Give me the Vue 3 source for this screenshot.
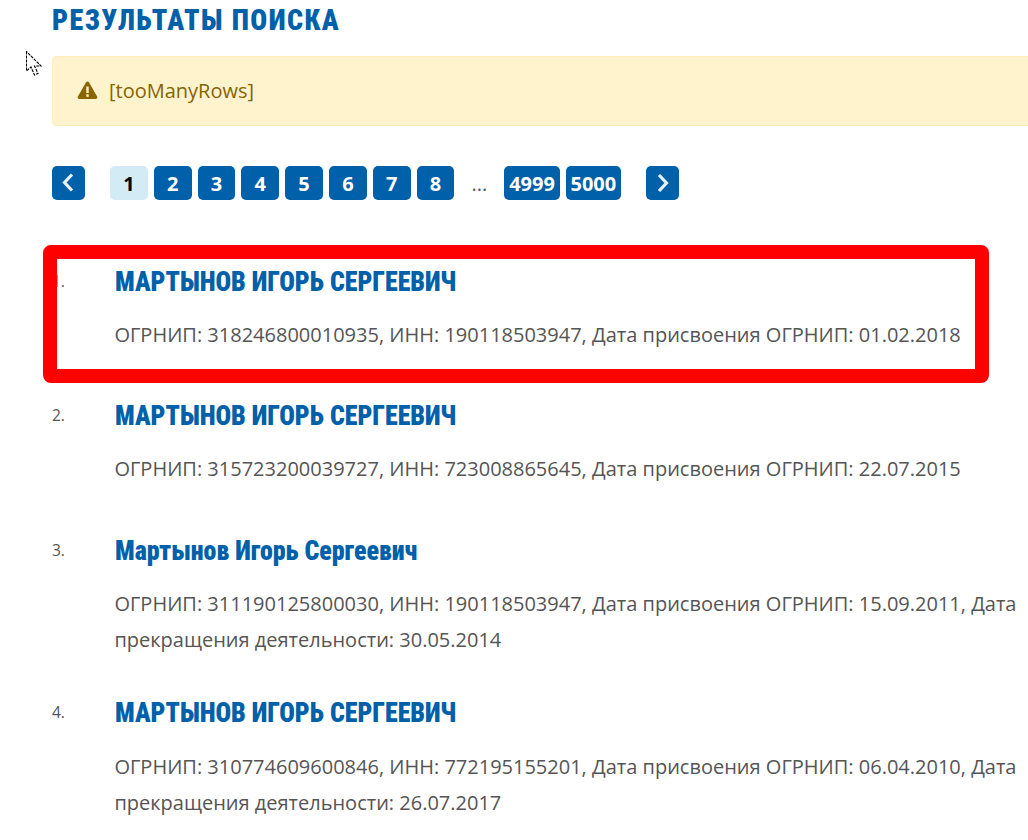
<script setup>
const pages = ['2', '3', '4', '5', '6', '7', '8']
const items = [
  { n: '1.', name: 'МАРТЫНОВ ИГОРЬ СЕРГЕЕВИЧ', lines: 'ОГРНИП: 318246800010935, ИНН: 190118503947, Дата присвоения ОГРНИП: 01.02.2018' },
  { n: '2.', name: 'МАРТЫНОВ ИГОРЬ СЕРГЕЕВИЧ', lines: 'ОГРНИП: 315723200039727, ИНН: 723008865645, Дата присвоения ОГРНИП: 22.07.2015' },
  { n: '3.', name: 'Мартынов Игорь Сергеевич', lines: 'ОГРНИП: 311190125800030, ИНН: 190118503947, Дата присвоения ОГРНИП: 15.09.2011, Дата прекращения деятельности: 30.05.2014' },
  { n: '4.', name: 'МАРТЫНОВ ИГОРЬ СЕРГЕЕВИЧ', lines: 'ОГРНИП: 310774609600846, ИНН: 772195155201, Дата присвоения ОГРНИП: 06.04.2010, Дата прекращения деятельности: 26.07.2017' }
]
</script>

<template>
  <div class="page">
    <h1 class="title">РЕЗУЛЬТАТЫ ПОИСКА</h1>
    <div class="alert">
      <svg class="warn" viewBox="0 0 20 18" width="21" height="18">
        <path d="M10 0.5c.7 0 1.2.3 1.6 1l8 14c.7 1.2-.1 2.5-1.5 2.5H1.9C.5 18-.3 16.700.4 15.500l8-14c.4-.7.9-1 1.600-1z" fill="#8a6500" />
        <rect x="8.800" y="5.500" width="2.400" height="6.500" fill="#fff3cd" />
        <rect x="8.800" y="13.300" width="2.400" height="2.500" fill="#fff3cd" />
      </svg>
      <span>[tooManyRows]</span>
    </div>
    <nav class="pager">
      <a class="btn arrow">
        <svg viewBox="0 0 33 34" width="33" height="34"><path d="M20 8.500l-7.500 8 7.500 8" fill="none" stroke="#e8f1f8" stroke-width="3.200" /></svg>
      </a>
      <div class="nums">
        <a class="btn num current">1</a>
        <a v-for="p in pages" :key="p" class="btn num">{{ p }}</a>
      </div>
      <span class="dots">...</span>
      <div class="nums">
        <a class="btn num">4999</a>
        <a class="btn num">5000</a>
      </div>
      <a class="btn arrow next">
        <svg viewBox="0 0 33 34" width="33" height="34"><path d="M13 9l7.500 8-7.500 8" fill="none" stroke="#e8f1f8" stroke-width="3.200" /></svg>
      </a>
    </nav>
    <ol class="results">
      <li v-for="item in items" :key="item.n" class="row">
        <span class="idx">{{ item.n }}</span>
        <div class="body">
          <h2 class="name">{{ item.name }}</h2>
          <p class="meta">{{ item.lines }}</p>
        </div>
      </li>
    </ol>
    <div class="mark"></div>
    <svg class="cursor" viewBox="0 0 16 25" width="16" height="25">
      <path d="M0.500 0.500v19.500l4.500-4 3.500 8 3.500-1.500-3.500-7.500h6.500z" fill="#fff" stroke="#000" stroke-width="1.100" stroke-dasharray="3 1" />
    </svg>
  </div>
</template>

<style scoped>
.page {
  position: relative;
  width: 1028px;
  height: 840px;
  overflow: hidden;
  background: #fff;
  padding-left: 52px;
  box-sizing: border-box;
  font-family: "Open Sans", sans-serif;
  color: #555;
}
.title {
  margin: 0;
  padding-top: 3px;
  height: 56px;
  box-sizing: border-box;
  font-family: "Roboto", sans-serif;
  font-stretch: 75%;
  font-weight: 900;
  font-size: 29px;
  line-height: 34px;
  letter-spacing: 1.5px;
  color: #0060aa;
  transform: scaleX(0.967);
  transform-origin: left center;
}
.alert {
  display: flex;
  align-items: center;
  gap: 11px;
  width: 1040px;
  height: 70px;
  box-sizing: border-box;
  padding: 0 0 2px 24px;
  background: #fff3cd;
  border: 1px solid #ffeeba;
  border-radius: 4px;
  color: #856404;
  font-size: 20px;
}
.pager {
  display: flex;
  align-items: center;
  margin-top: 40px;
  height: 34px;
}
.nums {
  display: flex;
  gap: 6px;
}
.btn {
  display: flex;
  align-items: center;
  justify-content: center;
  height: 34px;
  border-radius: 5px;
  background: #0060aa;
  color: #fff;
  font-weight: 700;
  font-size: 20px;
}
.num {
  min-width: 37.800px;
  padding: 0 4.800px;
  box-sizing: border-box;
}
.current {
  background: #d2ebf5;
  color: #000;
}
.arrow {
  width: 33.200px;
  margin-right: 24.800px;
}
.next {
  margin-left: 25px;
  margin-right: 0;
}
.dots {
  width: 50px;
  text-align: center;
  font-size: 20px;
  color: #555;
}
.results {
  list-style: none;
  margin: 65px 0 0;
  padding: 0;
}
.row {
  display: flex;
  min-height: 134.300px;
  padding-bottom: 37px;
  box-sizing: border-box;
}
.row:last-child {
  margin-top: 1px;
}
.row:last-child .meta {
  margin-top: 19px;
}
.idx {
  width: 62.800px;
  flex: none;
  font-size: 15.500px;
  line-height: 33px;
}
.body {
  width: 905px;
}
.name {
  margin: 0;
  font-family: "Roboto", sans-serif;
  font-stretch: 75%;
  font-weight: 900;
  font-size: 28px;
  line-height: 34px;
  color: #0060aa;
  transform: scaleX(0.926);
  transform-origin: left center;
}
.meta {
  margin: 18px 0 0;
  font-size: 20px;
  line-height: 36px;
  margin-left: -0.400px;
}
.mark {
  position: absolute;
  left: 43px;
  top: 245px;
  width: 946px;
  height: 138px;
  box-sizing: border-box;
  border: 14px solid #f00;
  border-radius: 8px;
}
.cursor {
  position: absolute;
  left: 26px;
  top: 51px;
}
</style>
